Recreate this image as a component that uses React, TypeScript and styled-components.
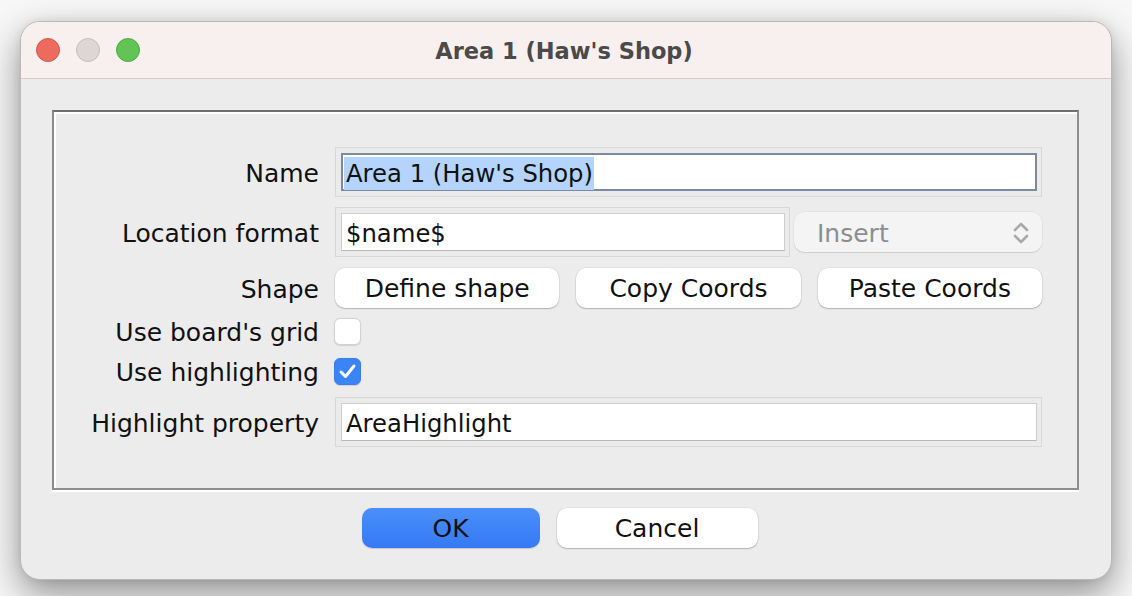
import React from "react";
import styled, { createGlobalStyle } from "styled-components";

const Global = createGlobalStyle`
  html, body { margin: 0; padding: 0; background: #f7f7f7; }
  body { font-family: "DejaVu Sans", "Liberation Sans", sans-serif; color: #111; }
  * { box-sizing: border-box; }
`;

const Page = styled.div`
  width: 1132px;
  height: 596px;
  padding: 21px 20px 0 20px;
  overflow: hidden;
`;

const Window = styled.div`
  width: 1092px;
  height: 559px;
  border-radius: 20px;
  border: 1px solid #b9b9b9;
  background: #ececec;
  overflow: hidden;
  box-shadow: 0 14px 36px rgba(0, 0, 0, 0.42), 0 0 8px rgba(0, 0, 0, 0.08);
  display: flex;
  flex-direction: column;
`;

const TitleBar = styled.div`
  height: 57px;
  flex: none;
  background: #f8f0ee;
  border-bottom: 1px solid #d3cbc9;
  display: grid;
  grid-template-columns: 1fr auto 1fr;
  align-items: center;
  padding: 0 15px;
`;

const Lights = styled.div`
  display: flex;
  gap: 16px;
  align-items: center;
`;

const Light = styled.span<{ $c: string; $b: string }>`
  width: 24px;
  height: 24px;
  border-radius: 50%;
  background: ${(p) => p.$c};
  border: 1px solid ${(p) => p.$b};
`;

const Title = styled.div`
  font-size: 22.5px;
  font-weight: bold;
  color: #4a4a4a;
  padding-right: 4px;
  padding-top: 1px;
`;

const Content = styled.div`
  flex: 1;
  padding: 31px 32px 0 31px;
  display: flex;
  flex-direction: column;
`;

const Panel = styled.div`
  height: 380px;
  border: 2px solid #8e8e8e;
  border-top-color: #6f6f6f;
  border-left-color: #8a8a8a;
  box-shadow: inset 2px 2px 0 #ffffff, 0 2px 0 #ffffff;
  padding: 35px 35px 0 0;
  display: flex;
  flex-direction: column;
`;

const Row = styled.div<{ $h: number; $top?: number }>`
  height: ${(p) => p.$h}px;
  margin-top: ${(p) => p.$top ?? 0}px;
  display: grid;
  grid-template-columns: 265px 1fr;
  column-gap: 16px;
  align-items: center;
`;

const Label = styled.div`
  font-size: 25px;
  text-align: right;
  color: #111;
  white-space: nowrap;
  padding-top: 3px;
`;

const FieldWell = styled.div`
  height: 50px;
  border: 1px solid #d8d8d8;
  background: #ebebeb;
  padding: 5px 4px 5px 5px;
`;

const Field = styled.div<{ $focus?: boolean }>`
  height: 38px;
  background: #fff;
  border: ${(p) => (p.$focus ? "2px solid #7d8ba0" : "1px solid #cfcfcf")};
  border-bottom-color: ${(p) => (p.$focus ? "#7d8ba0" : "#b8b8b8")};
  display: flex;
  align-items: center;
  padding-left: ${(p) => (p.$focus ? "1px" : "4px")};
  padding-top: 2px;
  font-size: 24.3px;
  color: #111;
  white-space: nowrap;
`;

const Selected = styled.span`
  background: #b4d4fd;
  padding: 2px 1px 2px 2px;
`;

const SplitRow = styled.div`
  display: grid;
  grid-template-columns: 1fr 248px;
  column-gap: 4px;
  align-items: center;
`;

const Combo = styled.div`
  height: 40px;
  border-radius: 10px;
  background: #f4f4f4;
  box-shadow: 0 1px 1px rgba(0, 0, 0, 0.1), 0 0 0 0.5px rgba(0, 0, 0, 0.06);
  display: flex;
  align-items: center;
  justify-content: space-between;
  padding: 2px 12px 0 23px;
  font-size: 25px;
  color: #8d8d8d;
`;

const Buttons3 = styled.div`
  display: grid;
  grid-template-columns: 1fr 1fr 1fr;
  column-gap: 17px;
`;

const Button = styled.button<{ $primary?: boolean; $w?: number }>`
  height: 40px;
  ${(p) => (p.$w ? `width: ${p.$w}px;` : "")}
  border: none;
  border-radius: 10px;
  background: ${(p) =>
    p.$primary ? "linear-gradient(#4a8ff8, #3579f6)" : "#ffffff"};
  box-shadow: ${(p) =>
    p.$primary
      ? "0 0.5px 1px rgba(0,0,0,0.15)"
      : "0 1px 1.5px rgba(0,0,0,0.22), 0 0 0 0.5px rgba(0,0,0,0.08)"};
  font-family: "DejaVu Sans", "Liberation Sans", sans-serif;
  font-size: 25px;
  color: #111;
  padding: 1px 0 0 0;
  cursor: default;
`;

const Check = styled.span<{ $on?: boolean }>`
  width: 27px;
  height: 27px;
  border-radius: 6px;
  background: ${(p) => (p.$on ? "#3b84f5" : "#ffffff")};
  border: 1px solid ${(p) => (p.$on ? "#3a7ee8" : "#d2d2d2")};
  box-shadow: 0 0.5px 1px rgba(0, 0, 0, 0.12);
  display: flex;
  align-items: center;
  justify-content: center;
  margin-left: -1px;
`;

const Footer = styled.div`
  margin-top: 18px;
  display: flex;
  justify-content: center;
  gap: 17px;
  padding-right: 12px;
`;

const Chevrons = () => (
  <svg width="18" height="26" viewBox="0 0 18 26" fill="none">
    <path d="M3 10 L9 4 L15 10" stroke="#a9a9a9" strokeWidth="2.6" strokeLinecap="round" strokeLinejoin="round" />
    <path d="M3 16 L9 22 L15 16" stroke="#a9a9a9" strokeWidth="2.6" strokeLinecap="round" strokeLinejoin="round" />
  </svg>
);

const CheckMark = () => (
  <svg width="19" height="17" viewBox="0 0 19 17" fill="none">
    <path d="M3 9 L7.5 13.5 L16 3" stroke="#fff" strokeWidth="3" strokeLinecap="round" strokeLinejoin="round" />
  </svg>
);

export default function App() {
  return (
    <Page>
      <Global />
      <Window>
        <TitleBar>
          <Lights>
            <Light $c="#ed6a5e" $b="#d4584c" />
            <Light $c="#ddd6d5" $b="#c4bdbc" />
            <Light $c="#61c454" $b="#51a944" />
          </Lights>
          <Title>Area 1 (Haw's Shop)</Title>
          <div />
        </TitleBar>
        <Content>
          <Panel>
            <Row $h={50}>
              <Label>Name</Label>
              <FieldWell>
                <Field $focus>
                  <Selected>Area 1 (Haw's Shop)</Selected>
                </Field>
              </FieldWell>
            </Row>
            <Row $h={50} $top={10}>
              <Label>Location format</Label>
              <SplitRow>
                <FieldWell>
                  <Field>$name$</Field>
                </FieldWell>
                <Combo>
                  <span>Insert</span>
                  <Chevrons />
                </Combo>
              </SplitRow>
            </Row>
            <Row $h={41} $top={10}>
              <Label>Shape</Label>
              <Buttons3>
                <Button>Define shape</Button>
                <Button>Copy Coords</Button>
                <Button>Paste Coords</Button>
              </Buttons3>
            </Row>
            <Row $h={40} $top={3}>
              <Label>Use board's grid</Label>
              <Check />
            </Row>
            <Row $h={40}>
              <Label>Use highlighting</Label>
              <Check $on>
                <CheckMark />
              </Check>
            </Row>
            <Row $h={50} $top={6}>
              <Label>Highlight property</Label>
              <FieldWell>
                <Field>AreaHighlight</Field>
              </FieldWell>
            </Row>
          </Panel>
          <Footer>
            <Button $primary $w={178}>OK</Button>
            <Button $w={201}>Cancel</Button>
          </Footer>
        </Content>
      </Window>
    </Page>
  );
}
